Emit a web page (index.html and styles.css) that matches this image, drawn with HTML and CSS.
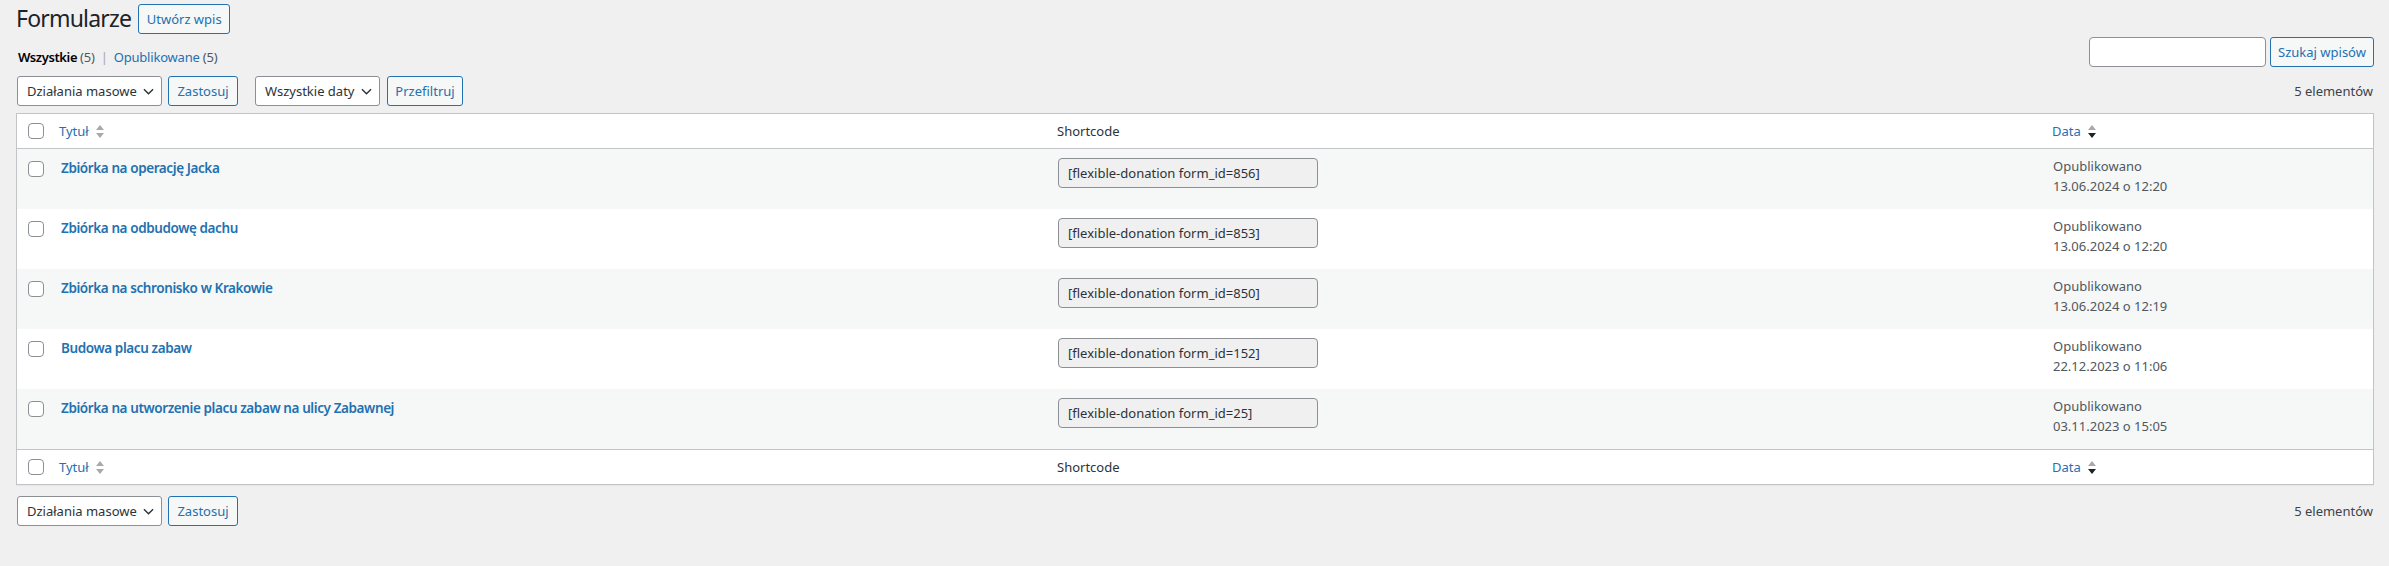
FILE: index.html
```html
<!DOCTYPE html>
<html lang="pl">
<head>
<meta charset="utf-8">
<title>Formularze</title>
<link rel="stylesheet" href="styles.css">
</head>
<body>
<div class="wrap">
  <div class="page-head">
    <h1 class="page-title">Formularze</h1>
    <a class="btn btn-new" href="#">Utwórz wpis</a>
  </div>

  <div class="filters">
    <ul class="views">
      <li><a class="view current" href="#">Wszystkie <span class="count">(5)</span></a></li>
      <li class="sep">|</li>
      <li><a class="view" href="#">Opublikowane <span class="count">(5)</span></a></li>
    </ul>
    <div class="search-box">
      <input class="search-input" type="search" aria-label="Szukaj">
      <button class="btn btn-search" type="button">Szukaj wpisów</button>
    </div>
  </div>

  <div class="tablenav tablenav-top">
    <div class="actions">
      <div class="select select-bulk"><span class="select-label">Działania masowe</span><svg class="chev" viewBox="0 0 12 7" width="11" height="7"><polyline points="1,1 6,6 11,1"/></svg></div>
      <button class="btn btn-apply" type="button">Zastosuj</button>
    </div>
    <div class="actions actions-filter">
      <div class="select select-date"><span class="select-label">Wszystkie daty</span><svg class="chev" viewBox="0 0 12 7" width="11" height="7"><polyline points="1,1 6,6 11,1"/></svg></div>
      <button class="btn btn-filter" type="button">Przefiltruj</button>
    </div>
    <div class="num">5 elementów</div>
  </div>

  <table class="list-table">
    <colgroup>
      <col class="c-cb">
      <col class="c-title">
      <col class="c-short">
      <col class="c-date">
    </colgroup>
    <thead>
      <tr>
        <th class="cb"><input class="cbx" type="checkbox" aria-label="Zaznacz wszystko"></th>
        <th class="th-title"><a class="sort" href="#">Tytuł <svg class="arrows" viewBox="0 0 8 13" width="8" height="13"><polygon class="a-up" points="4,0 8,5 0,5"/><polygon class="a-down" points="0,8 8,8 4,13"/></svg></a></th>
        <th class="th-short">Shortcode</th>
        <th class="th-date"><a class="sort" href="#">Data <svg class="arrows" viewBox="0 0 8 13" width="8" height="13"><polygon class="a-up" points="4,0 8,5 0,5"/><polygon class="a-down active" points="0,8 8,8 4,13"/></svg></a></th>
      </tr>
    </thead>
    <tbody>
      <tr>
        <td class="cb"><input class="cbx" type="checkbox"></td>
        <td><a class="row-title" href="#">Zbiórka na operację Jacka</a></td>
        <td><input class="sc" type="text" readonly value="[flexible-donation form_id=856]"></td>
        <td class="date">Opublikowano<br>13.06.2024 o 12:20</td>
      </tr>
      <tr>
        <td class="cb"><input class="cbx" type="checkbox"></td>
        <td><a class="row-title" href="#">Zbiórka na odbudowę dachu</a></td>
        <td><input class="sc" type="text" readonly value="[flexible-donation form_id=853]"></td>
        <td class="date">Opublikowano<br>13.06.2024 o 12:20</td>
      </tr>
      <tr>
        <td class="cb"><input class="cbx" type="checkbox"></td>
        <td><a class="row-title" href="#">Zbiórka na schronisko w Krakowie</a></td>
        <td><input class="sc" type="text" readonly value="[flexible-donation form_id=850]"></td>
        <td class="date">Opublikowano<br>13.06.2024 o 12:19</td>
      </tr>
      <tr>
        <td class="cb"><input class="cbx" type="checkbox"></td>
        <td><a class="row-title" href="#">Budowa placu zabaw</a></td>
        <td><input class="sc" type="text" readonly value="[flexible-donation form_id=152]"></td>
        <td class="date">Opublikowano<br>22.12.2023 o 11:06</td>
      </tr>
      <tr>
        <td class="cb"><input class="cbx" type="checkbox"></td>
        <td><a class="row-title" href="#">Zbiórka na utworzenie placu zabaw na ulicy Zabawnej</a></td>
        <td><input class="sc" type="text" readonly value="[flexible-donation form_id=25]"></td>
        <td class="date">Opublikowano<br>03.11.2023 o 15:05</td>
      </tr>
    </tbody>
    <tfoot>
      <tr>
        <th class="cb"><input class="cbx" type="checkbox" aria-label="Zaznacz wszystko"></th>
        <th class="th-title"><a class="sort" href="#">Tytuł <svg class="arrows" viewBox="0 0 8 13" width="8" height="13"><polygon class="a-up" points="4,0 8,5 0,5"/><polygon class="a-down" points="0,8 8,8 4,13"/></svg></a></th>
        <th class="th-short">Shortcode</th>
        <th class="th-date"><a class="sort" href="#">Data <svg class="arrows" viewBox="0 0 8 13" width="8" height="13"><polygon class="a-up" points="4,0 8,5 0,5"/><polygon class="a-down active" points="0,8 8,8 4,13"/></svg></a></th>
      </tr>
    </tfoot>
  </table>

  <div class="tablenav tablenav-bottom">
    <div class="actions">
      <div class="select select-bulk"><span class="select-label">Działania masowe</span><svg class="chev" viewBox="0 0 12 7" width="11" height="7"><polyline points="1,1 6,6 11,1"/></svg></div>
      <button class="btn btn-apply" type="button">Zastosuj</button>
    </div>
    <div class="num">5 elementów</div>
  </div>
</div>
</body>
</html>
```
FILE: styles.css
```css
html {
  background: #f0f0f1;
}

body {
  margin: 0;
  background: #f0f0f1;
  color: #3c434a;
  font-family: "Noto Sans", "Open Sans", sans-serif;
  font-size: 13px;
  line-height: 1.4;
}

a {
  text-decoration: none;
}

.wrap {
  padding: 4px 15px 0 16px;
}

/* ---------- heading ---------- */
.page-head {
  display: flex;
  align-items: center;
  gap: 7px;
  height: 30px;
}

.page-title {
  margin: -2px 0 0 0;
  font-size: 23px;
  font-weight: 400;
  line-height: 30px;
  color: #1d2327;
  letter-spacing: -0.8px;
}

.btn {
  display: inline-flex;
  align-items: center;
  justify-content: center;
  box-sizing: border-box;
  height: 30px;
  padding: 0;
  border: 1px solid #2271b1;
  border-radius: 3px;
  background: #f6f7f7;
  color: #2271b1;
  font-family: inherit;
  font-size: 13px;
  line-height: 1;
  white-space: nowrap;
}

.btn-new { width: 92px; }
.btn-search { width: 104px; }
.btn-apply { width: 70px; }
.btn-filter { width: 76px; }

/* ---------- views + search ---------- */
.filters {
  display: flex;
  justify-content: space-between;
  align-items: flex-start;
  margin-top: 3px;
  height: 30px;
}

.views {
  display: flex;
  gap: 6px;
  list-style: none;
  margin: 11px 0 0 2px;
  padding: 0;
  line-height: 19.5px;
  letter-spacing: -0.2px;
}

.view {
  color: #2271b1;
}

.view.current {
  color: #000;
  font-weight: 600;
  letter-spacing: -0.4px;
}

.count {
  color: #50575e;
  font-weight: 400;
  letter-spacing: -0.2px;
}

.sep {
  color: #a7aaad;
}

.search-box {
  display: flex;
  gap: 4px;
}

.search-input {
  box-sizing: border-box;
  width: 177px;
  height: 30px;
  margin: 0;
  border: 1px solid #8c8f94;
  border-radius: 4px;
  background: #fff;
}

/* ---------- tablenav ---------- */
.tablenav {
  display: flex;
  align-items: center;
  height: 30px;
}

.tablenav-top {
  margin: 9px 0 7px;
}

.tablenav-bottom {
  margin-top: 11px;
}

.actions {
  display: flex;
  gap: 6px;
  margin-left: 1px;
}

.actions-filter {
  gap: 7px;
  margin-left: 17px;
}

.select {
  display: flex;
  align-items: center;
  justify-content: space-between;
  box-sizing: border-box;
  height: 30px;
  padding: 0 7px 0 9px;
  border: 1px solid #8c8f94;
  border-radius: 3px;
  background: #fff;
  color: #2c3338;
  white-space: nowrap;
  overflow: hidden;
}

.select-bulk { width: 145px; }
.select-date { width: 125px; }

.chev {
  flex: none;
  fill: none;
  stroke: #2c3338;
  stroke-width: 1.5;
}

.num {
  margin-left: auto;
  margin-right: 1px;
  color: #3c434a;
}

/* ---------- table ---------- */
.list-table {
  width: 100%;
  table-layout: fixed;
  border-collapse: separate;
  border-spacing: 0;
  background: #fff;
  border: 1px solid #c3c4c7;
  box-shadow: 0 1px 1px rgba(0, 0, 0, 0.04);
}

.c-cb { width: 34px; }
.c-date { width: 330px; }

.list-table th {
  height: 35px;
  box-sizing: border-box;
  padding: 0 10px;
  text-align: left;
  font-weight: 400;
  color: #2c3338;
  line-height: 19px;
  vertical-align: middle;
}

.list-table thead th {
  border-bottom: 1px solid #c3c4c7;
}

.list-table tfoot th {
  border-top: 1px solid #c3c4c7;
}

.list-table th.cb {
  padding: 0 0 0 11px;
}

.list-table th.th-title {
  padding-left: 8px;
}

.list-table th.th-date {
  padding-left: 9px;
}

.sort {
  display: inline-flex;
  align-items: center;
  gap: 7px;
  color: #2271b1;
}

.arrows .a-up,
.arrows .a-down {
  fill: #a7aaad;
}

.arrows .a-down.active {
  fill: #1d2327;
}

.cbx {
  display: block;
  appearance: none;
  -webkit-appearance: none;
  box-sizing: border-box;
  width: 16px;
  height: 16px;
  margin: 0;
  border: 1px solid #8c8f94;
  border-radius: 4px;
  background: #fff;
}

.list-table tbody tr {
  height: 60px;
}

.list-table tbody tr:nth-child(odd) {
  background: #f6f7f7;
}

.list-table td {
  box-sizing: border-box;
  height: 60px;
  padding: 8px 10px;
  vertical-align: top;
  color: #50575e;
  line-height: 19.5px;
}

.list-table td.cb {
  padding: 12px 0 0 11px;
}

.row-title {
  display: inline-block;
  margin-top: 2px;
  color: #2271b1;
  font-size: 13.5px;
  font-weight: 600;
  letter-spacing: -0.4px;
}

.sc {
  display: block;
  box-sizing: border-box;
  width: 260px;
  height: 30px;
  margin: 1px 0 0 1px;
  padding: 0 9px;
  border: 1px solid #8c8f94;
  border-radius: 4px;
  background: #f0f0f1;
  color: #2c3338;
  font-family: inherit;
  font-size: 13px;
}

.date {
  color: #50575e;
}
```
